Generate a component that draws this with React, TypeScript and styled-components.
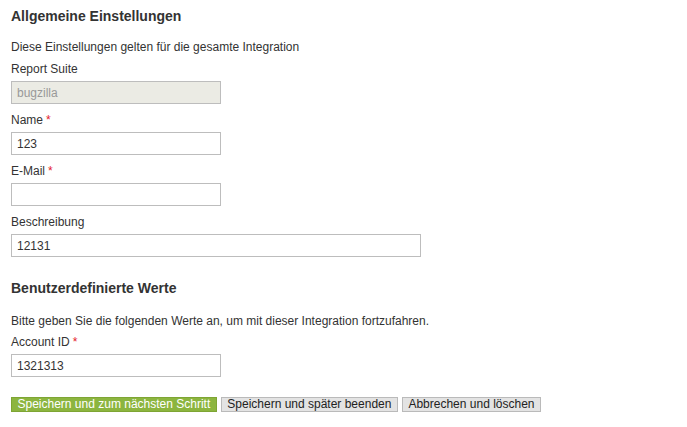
import React from "react";
import styled, { createGlobalStyle } from "styled-components";

const Global = createGlobalStyle`
  html, body { margin: 0; padding: 0; background: #fff; }
  body { font-family: "Liberation Sans", Arial, sans-serif; color: #333; }
  * { box-sizing: border-box; }
`;

const Page = styled.div`
  padding: 8px 11px;
  display: flex;
  flex-direction: column;
`;

const Heading = styled.h2<{ $top?: number }>`
  margin: ${(p) => p.$top ?? 0}px 0 0 0;
  font-size: 14px;
  line-height: 17px;
  font-weight: bold;
  color: #333;
`;

const Intro = styled.p<{ $top: number; $bottom: number }>`
  margin: ${(p) => p.$top}px 0 ${(p) => p.$bottom}px 0;
  font-size: 12px;
  line-height: 16px;
  color: #333;
`;

const Field = styled.div<{ $bottom?: number }>`
  display: flex;
  flex-direction: column;
  gap: 4px;
  margin-bottom: ${(p) => p.$bottom ?? 8}px;
`;

const Label = styled.label`
  font-size: 12px;
  line-height: 16px;
  color: #333;
`;

const Req = styled.span`
  color: #e4202a;
  margin-left: 3px;
`;

const Input = styled.input<{ $wide?: boolean }>`
  width: ${(p) => (p.$wide ? 410 : 210)}px;
  height: 23px;
  border: 1px solid #bdbdbd;
  padding: 0 5px;
  font-family: "Liberation Sans", Arial, sans-serif;
  font-size: 12px;
  color: #333;
  background: #fff;
  outline: none;
  &:disabled {
    background: #ebebe4;
    color: #999;
  }
`;

const Buttons = styled.div`
  display: flex;
  gap: 4px;
  margin-top: 12px;
`;

const Btn = styled.button<{ $primary?: boolean }>`
  height: 15px;
  padding: 0 5.5px;
  font-family: "Liberation Sans", Arial, sans-serif;
  font-size: 12px;
  line-height: 13px;
  border: 1px solid ${(p) => (p.$primary ? "#7ea534" : "#bababa")};
  background: ${(p) => (p.$primary ? "#8cb53f" : "#e3e3e3")};
  color: ${(p) => (p.$primary ? "#fff" : "#222")};
  border-radius: 0;
  cursor: pointer;
`;

export default function App() {
  return (
    <>
      <Global />
      <Page>
        <Heading>Allgemeine Einstellungen</Heading>
        <Intro $top={14} $bottom={6}>Diese Einstellungen gelten für die gesamte Integration</Intro>
        <Field>
          <Label>Report Suite</Label>
          <Input value="bugzilla" disabled readOnly />
        </Field>
        <Field>
          <Label>
            Name<Req>*</Req>
          </Label>
          <Input defaultValue="123" />
        </Field>
        <Field>
          <Label>
            E-Mail<Req>*</Req>
          </Label>
          <Input defaultValue="" />
        </Field>
        <Field $bottom={0}>
          <Label>Beschreibung</Label>
          <Input $wide defaultValue="12131" />
        </Field>
        <Heading $top={23}>Benutzerdefinierte Werte</Heading>
        <Intro $top={16} $bottom={5}>
          Bitte geben Sie die folgenden Werte an, um mit dieser Integration fortzufahren.
        </Intro>
        <Field $bottom={8}>
          <Label>
            Account ID<Req>*</Req>
          </Label>
          <Input defaultValue="1321313" />
        </Field>
        <Buttons>
          <Btn $primary>Speichern und zum nächsten Schritt</Btn>
          <Btn>Speichern und später beenden</Btn>
          <Btn>Abbrechen und löschen</Btn>
        </Buttons>
      </Page>
    </>
  );
}
